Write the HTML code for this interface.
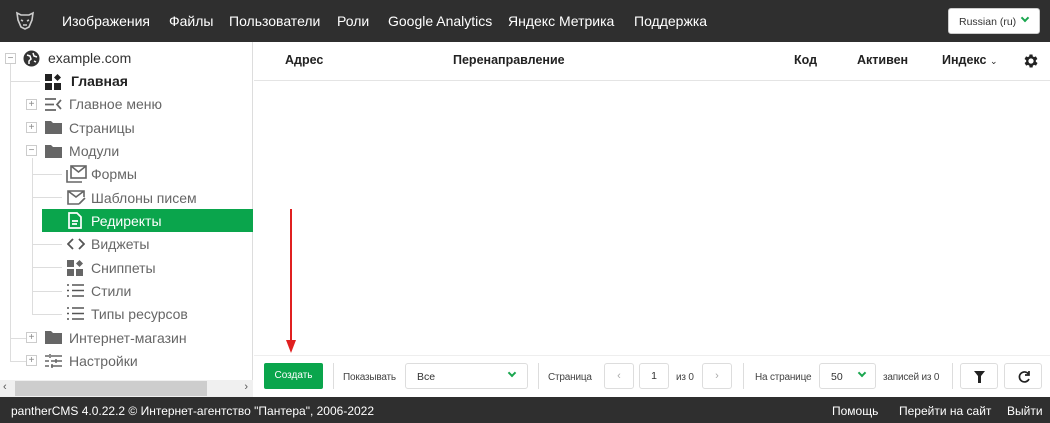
<!DOCTYPE html><html><head><meta charset="utf-8"><style>
*{margin:0;padding:0;box-sizing:border-box}
body{width:1050px;height:423px;overflow:hidden;font-family:"Liberation Sans",sans-serif;background:#fff;position:relative;color:#333}
.hdr{position:absolute;left:0;top:0;width:1050px;height:42px;background:#2f2f2f}
.hdr .n{position:absolute;top:13px;color:#fff;font-size:14px}
.lang{position:absolute;left:948px;top:8px;width:92px;height:26px;background:#fff;border-radius:3px;font-size:10.5px;color:#333;padding:7px 0 0 10px;border:1px solid #ccc}
.side{position:absolute;left:0;top:42px;width:253px;height:355px;border-right:1px solid #ddd}
.r{position:absolute;font-size:14px;color:#666;white-space:nowrap}
.bx{position:absolute;width:11px;height:11px;border:1px solid #ccc;background:#fff;font-size:10px;line-height:9px;text-align:center;color:#888}
.vl{position:absolute;width:1px;background:#ddd}
.hl{position:absolute;height:1px;background:#ddd}
.th{position:absolute;top:53px;font-size:12.5px;font-weight:bold;color:#222}
.tb{position:absolute;left:254px;top:355px;width:796px;height:42px;background:#fff;border-top:1px solid #eee}
.ft{position:absolute;left:0;top:397px;width:1050px;height:26px;background:#2f2f2f;color:#fff;font-size:12.5px}
.s{position:absolute;font-size:10px;color:#444;top:372px;letter-spacing:-0.2px}
.btn{position:absolute;border:1px solid #ddd;border-radius:3px;background:#fff;height:26px;top:363px}
.sep{position:absolute;top:363px;width:1px;height:26px;background:#ddd}
.chev{position:absolute;top:9px;width:6px;height:6px;border-right:2px solid #1aa64f;border-bottom:2px solid #1aa64f;transform:rotate(45deg)}
</style></head><body>
<div class="hdr">
<svg style="position:absolute;left:14px;top:9px" width="22" height="22" viewBox="0 0 22 22" fill="none" stroke="#ccc" stroke-width="1.6"><path d="M3 4l4 2h8l4-2-1 7-3 7-4 2-4-2-3-7z"/><path d="M7 11l2 1M15 11l-2 1M9 16h4"/></svg>
<span class="n" style="left:62px">Изображения</span><span class="n" style="left:169px">Файлы</span><span class="n" style="left:229px">Пользователи</span><span class="n" style="left:337px">Роли</span><span class="n" style="left:388px">Google Analytics</span><span class="n" style="left:508px">Яндекс Метрика</span><span class="n" style="left:634px">Поддержка</span>
<div class="lang">Russian (ru)<span class="chev" style="right:11px;top:6px"></span></div>
</div>
<div class="side">
<div class="vl" style="left:10px;top:22px;height:297px"></div>
<div class="vl" style="left:32px;top:116px;height:157px"></div>
<div class="hl" style="left:10px;top:39px;width:30px"></div>
<div class="hl" style="left:32px;top:132px;width:30px"></div><div class="hl" style="left:32px;top:155px;width:30px"></div><div class="hl" style="left:32px;top:202px;width:30px"></div><div class="hl" style="left:32px;top:225px;width:30px"></div><div class="hl" style="left:32px;top:249px;width:30px"></div><div class="hl" style="left:32px;top:272px;width:30px"></div>
<div class="hl" style="left:10px;top:296px;width:20px"></div><div class="hl" style="left:10px;top:319px;width:20px"></div>
<div class="bx" style="left:5px;top:11px">−</div>
<svg style="position:absolute;left:23px;top:8px" width="17" height="17" viewBox="0 0 17 17"><circle cx="8.5" cy="8.5" r="8" fill="#333"/><path d="M4 5l3 1 1 3-2 2 0 3M10 3l1 3 3 1M11 11l2 1" stroke="#fff" stroke-width="1.5" fill="none"/></svg>
<div class="r" style="left:48px;top:8px;color:#333">example.com</div>
<svg style="position:absolute;left:45px;top:32px" width="17" height="16"><rect x="0" y="0" width="7" height="7" fill="#222"/><rect x="0" y="9" width="7" height="7" fill="#222"/><rect x="9" y="9" width="7" height="7" fill="#222"/><path d="M12.5 0l3.5 3.5-3.5 3.5-3.5-3.5z" fill="#222"/></svg>
<div class="r" style="left:71px;top:31px;color:#222;font-weight:bold">Главная</div>
<div class="bx" style="left:26px;top:57px">+</div>
<svg style="position:absolute;left:45px;top:56px" width="17" height="13" stroke="#666" stroke-width="1.7" fill="none"><path d="M0 1h11M0 6.5h9M0 12h11M16 2l-4 4.5 4 4.5"/></svg>
<div class="r" style="left:69px;top:54px">Главное меню</div>
<div class="bx" style="left:26px;top:80px">+</div>
<svg style="position:absolute;left:45px;top:78px" width="17" height="14"><path d="M0 1h6l2 2h9v11H0z" fill="#666"/></svg>
<div class="r" style="left:69px;top:78px">Страницы</div>
<div class="bx" style="left:26px;top:103px">−</div>
<svg style="position:absolute;left:45px;top:102px" width="17" height="14"><path d="M0 1h6l2 2h9v11H0z" fill="#666"/></svg>
<div class="r" style="left:69px;top:101px">Модули</div>
<svg style="position:absolute;left:66px;top:123px" width="21" height="18" fill="none" stroke="#666" stroke-width="1.6"><rect x="5" y="1" width="15" height="12"/><path d="M5 1l7.5 6 7.5-6M1 5v12h15"/></svg>
<div class="r" style="left:91px;top:124px">Формы</div>
<svg style="position:absolute;left:67px;top:148px" width="20" height="16" fill="none" stroke="#666" stroke-width="1.6"><path d="M12 14H1V1h16v6M1 1l8 6 8-6M12 14l6-6"/></svg>
<div class="r" style="left:91px;top:148px">Шаблоны писем</div>
<div style="position:absolute;left:42px;top:167px;width:211px;height:23px;background:#0aa54c"></div>
<svg style="position:absolute;left:68px;top:170px" width="14" height="17" fill="none" stroke="#fff" stroke-width="1.7"><path d="M1 1h8l4 4v11H1z M4 9h6M4 12h5"/></svg>
<div class="r" style="left:91px;top:171px;color:#fff">Редиректы</div>
<svg style="position:absolute;left:67px;top:196px" width="18" height="12" fill="none" stroke="#555" stroke-width="1.8"><path d="M6 1L1 6l5 5M12 1l5 5-5 5"/></svg>
<div class="r" style="left:91px;top:194px">Виджеты</div>
<svg style="position:absolute;left:67px;top:218px" width="17" height="16"><rect x="0" y="0" width="7" height="7" fill="#666"/><rect x="0" y="9" width="7" height="7" fill="#666"/><rect x="9" y="9" width="7" height="7" fill="#666"/><path d="M12.5 0l3.5 3.5-3.5 3.5-3.5-3.5z" fill="#666"/></svg>
<div class="r" style="left:91px;top:218px">Сниппеты</div>
<svg style="position:absolute;left:67px;top:242px" width="17" height="13" stroke="#555" stroke-width="1.6"><path d="M0 1h2M0 6.5h2M0 12h2M5 1h12M5 6.5h12M5 12h12"/></svg>
<div class="r" style="left:91px;top:241px">Стили</div>
<svg style="position:absolute;left:67px;top:265px" width="17" height="13" stroke="#555" stroke-width="1.6"><path d="M0 1h2M0 6.5h2M0 12h2M5 1h12M5 6.5h12M5 12h12"/></svg>
<div class="r" style="left:91px;top:264px">Типы ресурсов</div>
<div class="bx" style="left:26px;top:290px">+</div>
<svg style="position:absolute;left:45px;top:288px" width="17" height="14"><path d="M0 1h6l2 2h9v11H0z" fill="#666"/></svg>
<div class="r" style="left:69px;top:288px">Интернет-магазин</div>
<div class="bx" style="left:26px;top:313px">+</div>
<svg style="position:absolute;left:45px;top:312px" width="17" height="14" stroke="#666" stroke-width="1.5"><path d="M0 2h17M0 7h17M0 12h17" stroke-dasharray="4 2 11"/><path d="M5 0v4M11 5v4M7 10v4"/></svg>
<div class="r" style="left:69px;top:311px">Настройки</div>
<div style="position:absolute;left:0;top:338px;width:253px;height:17px;background:#f0f0f0"><div style="position:absolute;left:15px;top:1px;width:192px;height:15px;background:#cdcdcd"></div><span style="position:absolute;left:3px;top:1px;font-size:11px;color:#555">‹</span><span style="position:absolute;right:5px;top:1px;font-size:11px;color:#555">›</span></div>
</div>
<div style="position:absolute;left:254px;top:80px;width:796px;height:1px;background:#e4e4e4"></div>
<div class="th" style="left:285px">Адрес</div><div class="th" style="left:453px">Перенаправление</div><div class="th" style="left:794px">Код</div><div class="th" style="left:857px">Активен</div><div class="th" style="left:942px">Индекс <span style="font-weight:normal;font-size:9px">⌄</span></div>
<svg style="position:absolute;left:1022px;top:52px" width="18" height="18" viewBox="0 0 24 24"><path fill="#222" d="M19.4 13a7.5 7.5 0 000-2l2.1-1.6-2-3.5-2.5 1a7 7 0 00-1.7-1L15 3.3h-4l-.4 2.6a7 7 0 00-1.7 1l-2.5-1-2 3.5L6.6 11a7.5 7.5 0 000 2l-2.1 1.6 2 3.5 2.5-1a7 7 0 001.7 1l.4 2.6h4l.4-2.6a7 7 0 001.7-1l2.5 1 2-3.5zM13 15.5a3.5 3.5 0 110-7 3.5 3.5 0 010 7z" transform="translate(-1 0)"/></svg>
<div style="position:absolute;left:290px;top:209px;width:1.5px;height:135px;background:#e02020"></div>
<svg style="position:absolute;left:286px;top:340px" width="10" height="13"><path d="M0 0l5 13 5-13z" fill="#e02020"/></svg>
<div class="tb"></div>
<div style="position:absolute;left:264px;top:363px;width:59px;height:26px;background:#0aa54c;border-radius:2px;color:#fff;font-size:10px;text-align:center;line-height:26px">Создать</div>
<div class="sep" style="left:333px"></div>
<div class="s" style="left:343px">Показывать</div>
<div class="btn" style="left:405px;width:123px"><span style="position:absolute;left:11px;top:7px;font-size:10.5px">Все</span><span class="chev" style="right:12px;top:6px"></span></div>
<div class="sep" style="left:538px"></div>
<div class="s" style="left:548px">Страница</div>
<div class="btn" style="left:604px;width:30px;text-align:center;color:#aaa;font-size:11px;line-height:24px">‹</div>
<div class="btn" style="left:639px;width:30px;text-align:center;font-size:10.5px;line-height:24px">1</div>
<div class="s" style="left:676px">из 0</div>
<div class="btn" style="left:702px;width:30px;text-align:center;color:#aaa;font-size:11px;line-height:24px">›</div>
<div class="sep" style="left:743px"></div>
<div class="s" style="left:755px">На странице</div>
<div class="btn" style="left:819px;width:57px"><span style="position:absolute;left:11px;top:7px;font-size:10.5px">50</span><span class="chev" style="right:10px;top:6px"></span></div>
<div class="s" style="left:883px">записей из 0</div>
<div class="sep" style="left:952px"></div>
<div class="btn" style="left:960px;width:38px"><svg style="position:absolute;left:13px;top:7px" width="11" height="12"><path d="M0 0h11L7 5v7H4V5z" fill="#222"/></svg></div>
<div class="btn" style="left:1004px;width:38px"><svg style="position:absolute;left:12px;top:6px" width="14" height="14" fill="none" stroke="#222" stroke-width="1.7"><path d="M11.5 4A5 5 0 1012 9"/><path d="M12 1v4H8" /></svg></div>
<div class="ft"><span style="position:absolute;left:11px;top:7px;font-size:12px">pantherCMS 4.0.22.2 © Интернет-агентство "Пантера", 2006-2022</span><span style="position:absolute;left:832px;top:7px;font-size:12px">Помощь</span><span style="position:absolute;left:899px;top:7px;font-size:12px">Перейти на сайт</span><span style="position:absolute;left:1007px;top:7px;font-size:12px">Выйти</span></div>
</body></html>
